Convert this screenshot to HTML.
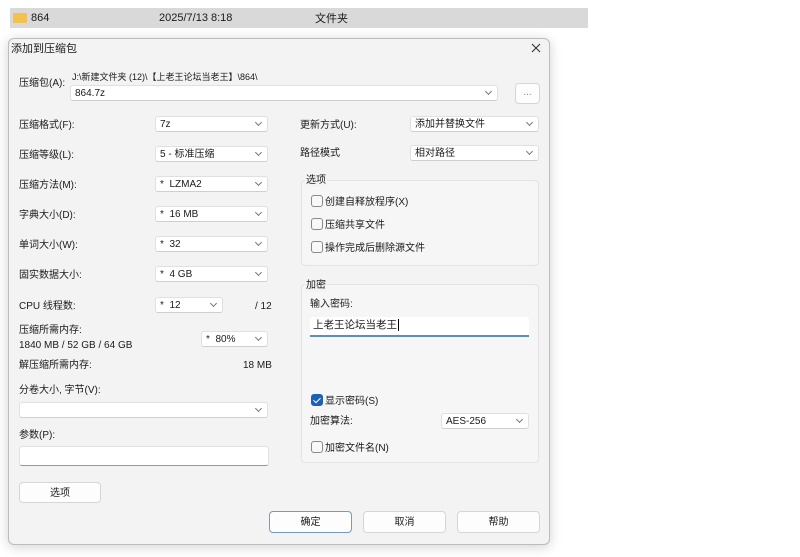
<!DOCTYPE html>
<html><head><meta charset="utf-8"><style>
*{box-sizing:border-box;margin:0;padding:0}
body{width:800px;height:557px;background:#fff;position:relative;overflow:hidden;font-family:"Liberation Sans","Noto Sans CJK SC",sans-serif;font-size:10px;line-height:16px;color:#1a1a1a}
.a{position:absolute;white-space:nowrap}
.dlg{position:absolute;left:8px;top:38px;width:542px;height:507px;background:#f3f3f3;border:1px solid #bcbcbc;border-radius:6px;box-shadow:0 2px 12px rgba(0,0,0,.18)}
.cb{position:absolute;background:#fff;border:1px solid #e0e0e0;border-bottom-color:#cfcfcf;border-radius:3px;height:16px;padding-left:4px;padding-top:1px;line-height:13px;font-size:10px}
.cb:after{content:"";position:absolute;right:6px;top:3px;width:4px;height:4px;border-right:1px solid #777;border-bottom:1px solid #777;transform:rotate(45deg)}
.btn{position:absolute;background:#fdfdfd;border:1px solid #d6d6d6;border-radius:4px;height:22px;text-align:center;line-height:21px;font-size:10px}
.grp{position:absolute;border:1px solid #e3e3e3;border-radius:4px;background:#f6f6f6}
.ck{position:absolute;width:12px;height:12px;border:1px solid #8a8a8a;border-radius:3px;background:#f8f8f8}
.lg{line-height:12px}
</style></head><body>
<div class="a" style="left:10px;top:8px;width:578px;height:20px;background:#d9d9d9"></div>
<div class="a" style="left:13px;top:13px;width:14px;height:10px;background:#f2c14e;border-radius:1px"></div>
<div class="a" style="left:31px;top:10px;font-size:11px">864</div>
<div class="a" style="left:159px;top:10px;font-size:11px">2025/7/13 8:18</div>
<div class="a" style="left:315px;top:11px;font-size:11px">文件夹</div>

<div class="dlg"></div>
<div class="a" style="left:11px;top:41px;font-size:11px">添加到压缩包</div>
<svg class="a" style="left:531px;top:43px" width="10" height="10" viewBox="0 0 10 10"><path d="M1 1L9 9M9 1L1 9" stroke="#333" stroke-width="1.1"/></svg>

<div class="a" style="left:19px;top:76px">压缩包(A):</div>
<div class="a lg" style="left:72px;top:71px;font-size:9px">J:\新建文件夹 (12)\【上老王论坛当老王】\864\</div>
<div class="cb" style="left:70px;top:85px;width:428px">864.7z</div>
<div class="btn" style="left:515px;top:83px;width:25px;height:21px;line-height:17px;color:#888">...</div>

<div class="a" style="left:19px;top:118px">压缩格式(F):</div><div class="cb" style="left:155px;top:116px;width:113px">7z</div>
<div class="a" style="left:19px;top:148px">压缩等级(L):</div><div class="cb" style="left:155px;top:146px;width:113px">5 - 标准压缩</div>
<div class="a" style="left:19px;top:178px">压缩方法(M):</div><div class="cb" style="left:155px;top:176px;width:113px">*&nbsp; LZMA2</div>
<div class="a" style="left:19px;top:208px">字典大小(D):</div><div class="cb" style="left:155px;top:206px;width:113px">*&nbsp; 16 MB</div>
<div class="a" style="left:19px;top:238px">单词大小(W):</div><div class="cb" style="left:155px;top:236px;width:113px">*&nbsp; 32</div>
<div class="a" style="left:19px;top:268px">固实数据大小:</div><div class="cb" style="left:155px;top:266px;width:113px">*&nbsp; 4 GB</div>
<div class="a" style="left:19px;top:299px">CPU 线程数:</div><div class="cb" style="left:155px;top:297px;width:68px">*&nbsp; 12</div>
<div class="a" style="left:255px;top:299px">/ 12</div>
<div class="a lg" style="left:19px;top:325px">压缩所需内存:</div>
<div class="a lg" style="left:19px;top:340px">1840 MB / 52 GB / 64 GB</div>
<div class="cb" style="left:201px;top:331px;width:67px">*&nbsp; 80%</div>
<div class="a" style="left:19px;top:358px">解压缩所需内存:</div>
<div class="a" style="left:243px;top:358px">18 MB</div>
<div class="a" style="left:19px;top:383px">分卷大小, 字节(V):</div>
<div class="cb" style="left:19px;top:402px;width:249px"></div>
<div class="a" style="left:19px;top:428px">参数(P):</div>
<div class="a" style="left:19px;top:446px;width:250px;height:20px;background:#fff;border:1px solid #e0e0e0;border-bottom-color:#999;border-radius:3px"></div>
<div class="btn" style="left:19px;top:482px;width:82px;height:21px">选项</div>

<div class="a" style="left:300px;top:118px">更新方式(U):</div><div class="cb" style="left:410px;top:116px;width:129px">添加并替换文件</div>
<div class="a" style="left:300px;top:146px">路径模式</div><div class="cb" style="left:410px;top:145px;width:129px">相对路径</div>

<div class="grp" style="left:301px;top:180px;width:238px;height:86px"></div>
<div class="a lg" style="left:305px;top:175px;background:#f3f3f3;padding:0 1px">选项</div>
<div class="ck" style="left:311px;top:195px"></div><div class="a" style="left:325px;top:195px">创建自释放程序(X)</div>
<div class="ck" style="left:311px;top:218px"></div><div class="a" style="left:325px;top:218px">压缩共享文件</div>
<div class="ck" style="left:311px;top:241px"></div><div class="a" style="left:325px;top:241px">操作完成后删除源文件</div>

<div class="grp" style="left:301px;top:284px;width:238px;height:179px"></div>
<div class="a lg" style="left:305px;top:280px;background:#f3f3f3;padding:0 1px">加密</div>
<div class="a" style="left:310px;top:297px">输入密码:</div>
<div class="a" style="left:310px;top:317px;width:219px;height:20px;background:#fff;border-bottom:2px solid #5b8fc2;border-radius:3px 3px 0 0;padding:0 3px;line-height:16px;font-size:10.5px">上老王论坛当老王<span style="border-left:1px solid #000;margin-left:1px"></span></div>
<div class="ck" style="left:311px;top:394px;background:#1a62b8;border-color:#1a62b8"><div style="position:absolute;left:3px;top:1px;width:4px;height:7px;border-right:1.3px solid #fff;border-bottom:1.3px solid #fff;transform:rotate(45deg)"></div></div>
<div class="a" style="left:325px;top:394px">显示密码(S)</div>
<div class="a" style="left:310px;top:414px">加密算法:</div>
<div class="cb" style="left:441px;top:413px;width:88px">AES-256</div>
<div class="ck" style="left:311px;top:441px"></div><div class="a" style="left:325px;top:441px">加密文件名(N)</div>

<div class="btn" style="left:269px;top:511px;width:83px;border-color:#6f9ccc">确定</div>
<div class="btn" style="left:363px;top:511px;width:83px">取消</div>
<div class="btn" style="left:457px;top:511px;width:83px">帮助</div>
</body></html>
